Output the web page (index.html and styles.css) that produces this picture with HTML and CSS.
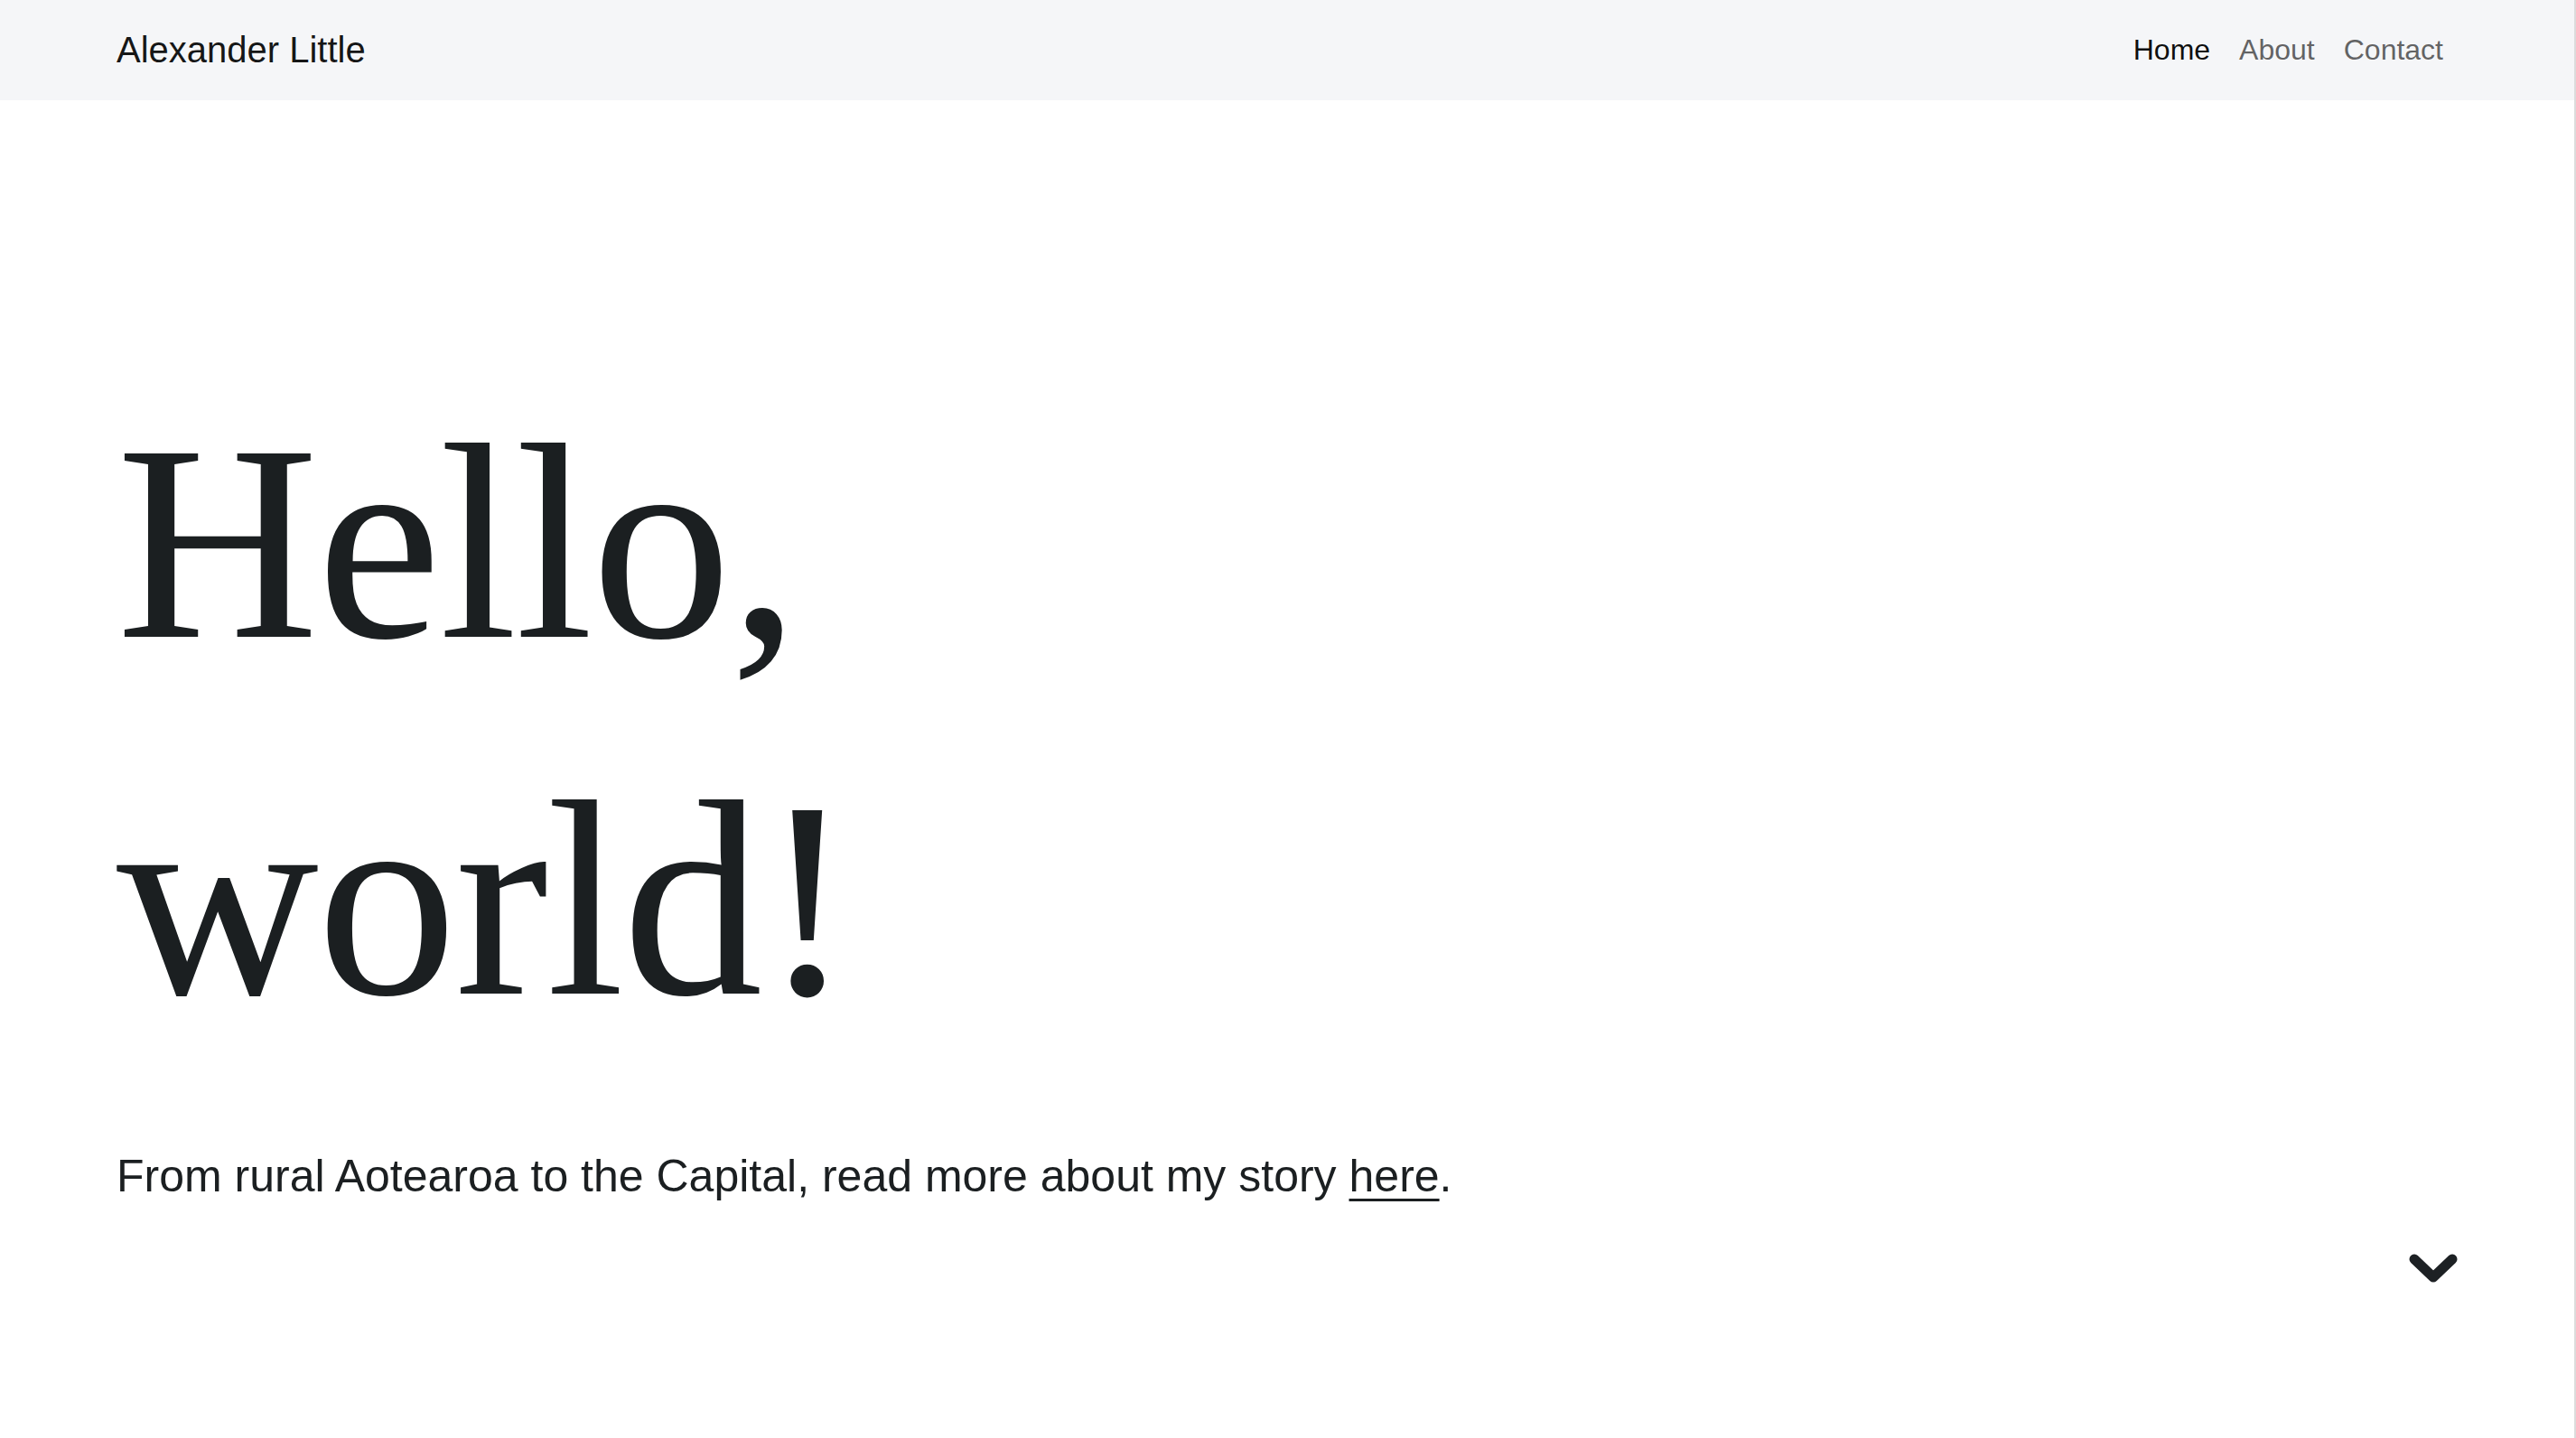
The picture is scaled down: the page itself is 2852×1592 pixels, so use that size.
FILE: index.html
```html
<!DOCTYPE html>
<html lang="en">
<head>
<meta charset="utf-8">
<title>Alexander Little</title>
<link rel="stylesheet" href="styles.css">
</head>
<body>
<header class="navbar">
  <a class="brand" href="#">Alexander Little</a>
  <nav class="nav">
    <a class="nav-link active" href="#">Home</a>
    <a class="nav-link" href="#">About</a>
    <a class="nav-link" href="#">Contact</a>
  </nav>
</header>
<main class="hero">
  <h1 class="title">Hello,<br>world!</h1>
  <p class="lead">From rural Aotearoa to the Capital, read more about my story <a href="#">here</a>.</p>
  <div class="scroll-row">
    <svg class="chevron" width="54" height="32" viewBox="0 0 54 32" aria-hidden="true">
      <path d="M6 6 L27 26 L48 6" fill="none" stroke="#1d2124" stroke-width="11" stroke-linecap="round" stroke-linejoin="round"/>
    </svg>
  </div>
</main>
<div class="edge"></div>
</body>
</html>
```
FILE: styles.css
```css
html, body {
  margin: 0;
  padding: 0;
  background: #ffffff;
}
body {
  font-family: "Liberation Sans", Arial, sans-serif;
  color: #1d2124;
  min-height: 1592px;
}
.navbar {
  height: 111px;
  box-sizing: border-box;
  background: #f5f6f8;
  display: flex;
  align-items: center;
  justify-content: space-between;
  padding: 0 131px 2px 129px;
}
.brand {
  font-size: 40px;
  color: rgba(0, 0, 0, 0.92);
  text-decoration: none;
  line-height: 60px;
}
.nav {
  display: flex;
  align-items: center;
}
.nav-link {
  font-size: 32px;
  line-height: 48px;
  padding: 0 16px;
  color: rgba(0, 0, 0, 0.62);
  text-decoration: none;
}
.nav-link.active {
  color: rgba(0, 0, 0, 0.95);
}
.hero {
  padding: 292px 131px 0 129px;
}
.title {
  margin: 0;
  font-family: "Liberation Serif", "Times New Roman", serif;
  font-weight: 400;
  font-size: 310px;
  line-height: 395px;
  letter-spacing: -2px;
  color: #1b1f21;
}
.lead {
  margin: 72px 0 0 0;
  font-size: 50px;
  line-height: 75px;
  color: #1b1f21;
}
.lead a {
  color: #1b1f21;
  text-decoration: underline;
  text-decoration-thickness: 3px;
  text-underline-offset: 8px;
}
.scroll-row {
  display: flex;
  justify-content: flex-end;
  margin-top: 48px;
}
.chevron {
  display: block;
}
.edge {
  position: fixed;
  top: 0;
  right: 0;
  width: 2px;
  height: 100%;
  background: #dcdcdc;
}
```
